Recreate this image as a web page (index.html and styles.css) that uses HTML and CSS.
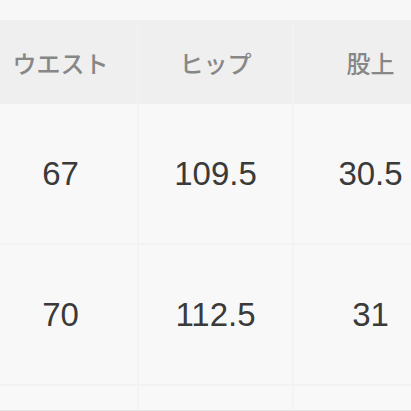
FILE: index.html
```html
<!DOCTYPE html>
<html lang="ja">
<head>
<meta charset="utf-8">
<link rel="stylesheet" href="styles.css">
</head>
<body>
<div class="page">
  <div class="table">
    <div class="cell head">ウエスト</div>
    <div class="cell head">ヒップ</div>
    <div class="cell head">股上</div>
    <div class="cell num">67</div>
    <div class="cell num">109.5</div>
    <div class="cell num">30.5</div>
    <div class="cell num">70</div>
    <div class="cell num">112.5</div>
    <div class="cell num">31</div>
    <div class="cell foot"></div>
    <div class="cell foot"></div>
    <div class="cell foot"></div>
  </div>
</div>
</body>
</html>
```
FILE: styles.css
```css
html, body {
  margin: 0;
  padding: 0;
  background: #f7f7f7;
  overflow: hidden;
}
.page {
  width: 411px;
  height: 411px;
  overflow: hidden;
  padding-top: 20px;
  box-sizing: border-box;
}
.table {
  display: grid;
  grid-template-columns: 155px 155px 155px;
  grid-template-rows: 84px 141px 141px 24px;
  margin-left: -16px;
  width: 465px;
  border-bottom: 1px solid #e4e4e4;
}
.cell {
  display: flex;
  align-items: center;
  justify-content: center;
  border-right: 2px solid #f3f3f3;
  box-sizing: border-box;
}
.head {
  background: #efefef;
  color: #878787;
  font-family: "Noto Sans CJK JP", "Noto Sans", sans-serif;
  font-size: 24px;
  font-weight: 500;
  border-right-color: #f1f1f1;
}
.num {
  background: #f8f8f8;
  color: #3a3a3a;
  font-family: "Liberation Sans", Arial, sans-serif;
  font-size: 33px;
  font-weight: 400;
  border-bottom: 2px solid #f2f2f2;
}
.foot {
  background: #f8f8f8;
}
```
